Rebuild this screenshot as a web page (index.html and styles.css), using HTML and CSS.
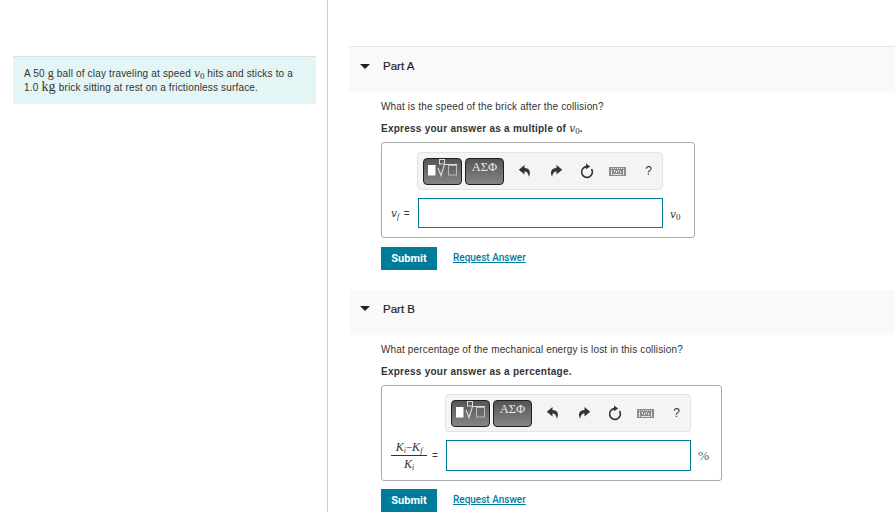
FILE: index.html
```html
<!DOCTYPE html>
<html lang="en">
<head>
  <meta name="viewport" content="width=device-width, initial-scale=1.0">
  <title>Part A and Part B</title>
  <link rel="stylesheet" href="styles.css">
</head>
<body>

<svg class="defs" width="0" height="0">
  <symbol id="ico-undo" viewBox="0 0 14 14">
    <path d="M6.500 1 .8 5.800 6.500 10.400V7.400C9 7.400 10.200 8.800 10.800 12.800 13.400 8 11.600 4 6.500 3.900Z"/>
  </symbol>
  <symbol id="ico-redo" viewBox="0 0 14 14">
    <path d="M7.500 1 13.200 5.800 7.500 10.400V7.400C5 7.400 3.800 8.800 3.200 12.800 .6 8 2.400 4 7.500 3.900Z"/>
  </symbol>
  <symbol id="ico-reset" viewBox="0 0 14 16">
    <path d="M7 3.600A5.400 5.400 0 1 0 11.500 6" fill="none" stroke="#333" stroke-width="1.600"/>
    <path d="M6 .4 10.200 3.400 6 6.200Z"/>
  </symbol>
  <symbol id="ico-keys" viewBox="0 0 17 9">
    <rect width="17" height="9" fill="#8c8c8c"/>
    <path d="M2 1h1v1H2zM4 1h1v1H4zM6 1h1v1H6zM8 1h1v1H8zM10 1h1v1h-1zM12 1h1v1h-1zM14 1h1v1h-1zM2 3h1v5H2zM14 3h1v5h-1zM5 3h1v2H5zM7 4h1v2H7zM9 3h1v2H9zM11 4h1v2h-1zM4 7h9v1H4z" fill="#e6e6e6"/>
  </symbol>
  <symbol id="ico-templates" viewBox="0 0 37 25">
    <rect x="4" y="6" width="7.500" height="10.500" fill="#fff"/>
    <rect x="15.500" y=".5" width="5" height="4.500" fill="none" stroke="#ddd"/>
    <path d="M14 9l3 7.500L20.500 5.500H33" fill="none" stroke="#ddd" stroke-width="1.100"/>
    <rect x="24.500" y="6.500" width="8" height="9.500" fill="none" stroke="#bbb"/>
  </symbol>
</svg>

<div class="page">
  <div class="left">
    <div class="intro">
      A 50 <span class="unit">g</span> ball of clay traveling at speed <span class="var">v</span><sub class="sub">0</sub> hits and sticks to a
      1.0 <span class="unit unit-big">kg</span> brick sitting at rest on a frictionless surface.
    </div>
  </div>

  <div class="right">
    <section class="part">
      <div class="part-head"><span class="caret"></span><h2>Part A</h2></div>
      <div class="part-body">
        <p class="question">What is the speed of the brick after the collision?</p>
        <p class="instruction">Express your answer as a multiple of <span class="var">v</span><sub class="sub">0</sub>.</p>
        <div class="answer">
          <div class="tool-row tool-row-a">
            <div class="toolbar">
              <button class="tpl"><svg width="37" height="25"><use href="#ico-templates"/></svg></button>
              <button class="tpl tpl-greek">ΑΣΦ</button>
              <span class="tool"><svg width="14" height="14"><use href="#ico-undo"/></svg></span>
              <span class="tool"><svg width="14" height="14"><use href="#ico-redo"/></svg></span>
              <span class="tool"><svg width="14" height="16"><use href="#ico-reset"/></svg></span>
              <span class="tool"><svg width="17" height="9"><use href="#ico-keys"/></svg></span>
              <span class="tool help">?</span>
            </div>
          </div>
          <div class="input-row">
            <div class="label label-a"><span class="var">v</span><sub class="sub sub-f">f</sub> <span class="eq">=</span></div>
            <div class="field"></div>
            <div class="suffix"><span class="var">v</span><sub class="sub">0</sub></div>
          </div>
        </div>
        <div class="actions">
          <button class="btn">Submit</button>
          <a class="link" href="#">Request Answer</a>
        </div>
      </div>
    </section>

    <section class="part part-b">
      <div class="part-head"><span class="caret"></span><h2>Part B</h2></div>
      <div class="part-body">
        <p class="question">What percentage of the mechanical energy is lost in this collision?</p>
        <p class="instruction">Express your answer as a percentage.</p>
        <div class="answer answer-b">
          <div class="tool-row tool-row-b">
            <div class="toolbar">
              <button class="tpl"><svg width="37" height="25"><use href="#ico-templates"/></svg></button>
              <button class="tpl tpl-greek">ΑΣΦ</button>
              <span class="tool"><svg width="14" height="14"><use href="#ico-undo"/></svg></span>
              <span class="tool"><svg width="14" height="14"><use href="#ico-redo"/></svg></span>
              <span class="tool"><svg width="14" height="16"><use href="#ico-reset"/></svg></span>
              <span class="tool"><svg width="17" height="9"><use href="#ico-keys"/></svg></span>
              <span class="tool help">?</span>
            </div>
          </div>
          <div class="input-row">
            <div class="label label-b">
              <span class="frac">
                <span class="num"><span class="var-k">K</span><sub class="sub sub-f">i</sub>−<span class="var-k">K</span><sub class="sub sub-f">f</sub></span>
                <span class="den"><span class="var-k">K</span><sub class="sub sub-f">i</sub></span>
              </span>
              <span class="eq">=</span>
            </div>
            <div class="field"></div>
            <div class="suffix suffix-pct">%</div>
          </div>
        </div>
        <div class="actions">
          <button class="btn">Submit</button>
          <a class="link" href="#">Request Answer</a>
        </div>
      </div>
    </section>
  </div>
</div>

</body>
</html>
```

FILE: styles.css
```css
body {
  font-family: "Liberation Sans", Arial, sans-serif;
  margin: 0;
  padding: 0;
  background: white;
  color: #333;
  overflow: hidden;
}
.defs {
  position: absolute;
}
.page {
  display: flex;
  height: 512px;
  overflow: hidden;
}
.left {
  width: 327px;
  flex: none;
  border-right: 1px solid #c7ccd1;
  padding-top: 56px;
}
.intro {
  margin: 0 11px 0 13px;
  padding: 10px 11px 0;
  height: 37px;
  background: #e4f5f6;
  border-top: 1px solid #dcdfe1;
  font-size: 10px;
  line-height: 14px;
  letter-spacing: 0.17px;
}
.var {
  font-family: "DejaVu Serif", serif;
  font-style: italic;
  font-weight: normal;
  font-size: 10.5px;
  line-height: 0;
  letter-spacing: 0;
}
.var-k {
  font-family: "Liberation Serif", serif;
  font-style: italic;
  font-size: 12px;
}
.sub {
  font-family: "Liberation Serif", serif;
  font-size: 9px;
  font-weight: normal;
  line-height: 0;
  letter-spacing: 0;
  vertical-align: -2px;
}
.sub-f {
  font-style: italic;
  font-size: 8px;
}
.unit {
  font-family: "Liberation Serif", serif;
  font-size: 12px;
  line-height: 0;
}
.unit-big {
  font-size: 14px;
}
.right {
  flex: 1;
  padding: 46px 0 0 21px;
}
.part-b {
  margin-top: 20px;
}
.part-head {
  display: flex;
  align-items: flex-start;
  height: 45px;
  background: #f9f9f9;
  border-top: 1px solid #e5e5e5;
}
.part-b .part-head {
  border-top: none;
}
.caret {
  width: 0;
  height: 0;
  margin: 17px 0 0 11px;
  border-left: 5px solid transparent;
  border-right: 5px solid transparent;
  border-top: 5px solid #222;
}
.part-b .caret {
  margin-top: 16px;
}
.part-head h2 {
  margin: 13px 0 0 13px;
  font-size: 11.5px;
  line-height: 13px;
  font-weight: normal;
  color: #222;
  -webkit-text-stroke: 0.2px #222;
}
.part-body {
  padding: 0 0 0 32px;
}
.question {
  margin: 0;
  padding-top: 8px;
  font-size: 10px;
  line-height: 13px;
  letter-spacing: 0.15px;
}
.instruction {
  margin: 9px 0 0;
  font-size: 10px;
  line-height: 13px;
  font-weight: bold;
  letter-spacing: 0.25px;
}
.answer {
  box-sizing: border-box;
  width: 314px;
  height: 96px;
  margin-top: 7px;
  padding: 9px 0 0;
  border: 1px solid #aaa;
  border-radius: 3px;
}
.answer-b {
  width: 341px;
  padding-top: 8px;
}
.tool-row-a {
  padding-left: 35px;
}
.tool-row-b {
  padding-left: 63px;
}
.toolbar {
  display: flex;
  align-items: center;
  box-sizing: border-box;
  width: 246px;
  height: 38px;
  padding: 0 5px;
  background: #f4f4f4;
  border: 1px solid #e3e3e3;
  border-radius: 4px;
}
.tpl {
  flex: none;
  box-sizing: border-box;
  width: 39px;
  height: 27px;
  padding: 0;
  margin-right: 3px;
  background: linear-gradient(#555, #858585);
  border: 1px solid #1f1f1f;
  border-radius: 4px;
  color: #e8e8e8;
}
.tpl svg {
  display: block;
}
.tpl-greek {
  font-family: "Liberation Serif", serif;
  font-size: 12.5px;
  line-height: 14px;
  padding-bottom: 8px;
}
.tool {
  flex: none;
  display: flex;
  justify-content: center;
  align-items: center;
  width: 31px;
  height: 24px;
  color: #333;
}
.tool svg {
  fill: #333;
}
.tpl-greek + .tool {
  margin-left: 2px;
}
.help {
  font-size: 12px;
}
.input-row {
  display: flex;
  align-items: center;
  margin-top: 8px;
}
.label {
  flex: none;
  font-size: 9px;
}
.label-a {
  width: 36px;
  padding-left: 9px;
  box-sizing: border-box;
}
.label-a .eq {
  margin-left: 2px;
}
.label-b {
  display: flex;
  align-items: center;
  gap: 5px;
  width: 64px;
  padding-left: 9px;
  box-sizing: border-box;
}
.frac {
  display: flex;
  flex-direction: column;
  align-items: center;
  width: 36px;
  font-family: "Liberation Serif", serif;
}
.num {
  white-space: nowrap;
  border-bottom: 1px solid #333;
  padding-bottom: 2px;
  line-height: 12px;
  width: 100%;
  text-align: center;
  font-size: 11px;
}
.den {
  line-height: 12px;
  padding-top: 2px;
}
.eq {
  font-size: 10px;
}
.field {
  box-sizing: border-box;
  width: 245px;
  height: 30px;
  background: white;
  border: 1px solid #007c9b;
}
.answer-b .field {
  height: 31px;
}
.suffix {
  margin-left: 7px;
}
.suffix-pct {
  font-family: "Liberation Serif", serif;
  font-size: 13.5px;
  color: #4a6a80;
}
.actions {
  display: flex;
  align-items: center;
  margin-top: 9px;
}
.answer-b + .actions {
  margin-top: 8px;
}
.btn {
  width: 56px;
  height: 23px;
  padding: 0;
  background-color: #007c9b;
  color: white;
  border: none;
  font-family: Roboto, Arial, sans-serif;
  font-size: 11px;
  font-weight: bold;
}
.link {
  margin: 0 0 2px 16px;
  color: #007c9b;
  font-family: Roboto, Arial, sans-serif;
  font-size: 10px;
  font-weight: 500;
}
```
